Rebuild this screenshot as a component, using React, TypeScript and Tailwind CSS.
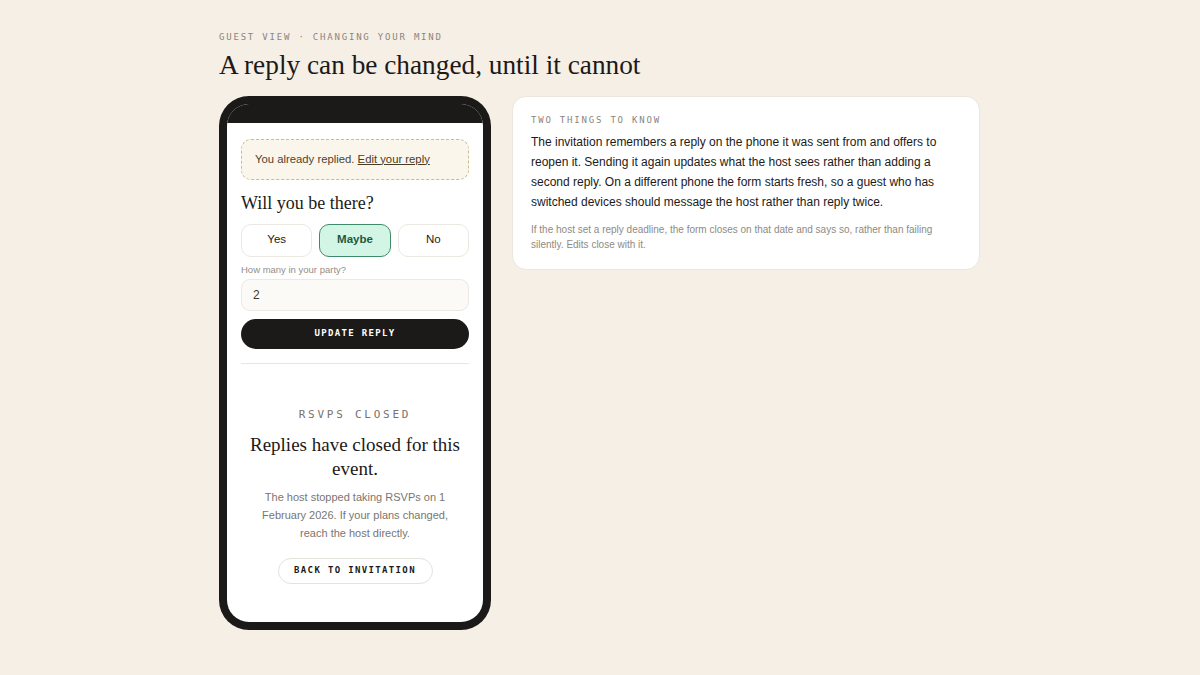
import React from "react";

const mono = { fontFamily: '"DejaVu Sans Mono", "Liberation Mono", monospace' };
const serif = { fontFamily: '"Liberation Serif", "Times New Roman", serif' };
const sans = { fontFamily: '"Liberation Sans", Arial, sans-serif' };

export default function App() {
  return (
    <div className="min-h-[675px] w-full bg-[#f5efe6] pl-[219px] pt-[31px]" style={sans}>
      <div className="text-[9px] tracking-[0.2em] text-[#8a857e] uppercase" style={mono}>
        Guest view · Changing your mind
      </div>
      <h1 className="mt-[3px] text-[27.3px] leading-[34px] text-[#1c1a18]" style={serif}>
        A reply can be changed, until it cannot
      </h1>
      <div className="mt-[14px] flex items-start gap-[21px]">
        {/* Phone */}
        <div className="w-[272px] h-[534px] rounded-[30px] bg-[#1c1a18] p-[8px] flex flex-col">
          <div className="flex-1 rounded-[22px] overflow-hidden bg-white flex flex-col">
            <div className="h-[19px] shrink-0 bg-[#1c1a18] rounded-t-[22px] border-x border-[#3a3733]" />
            <div className="flex-1 px-[14px] pt-[16px] flex flex-col">
              <div className="h-[41px] rounded-[10px] border border-dashed border-[#cdbb8e] bg-[#fbf6ec] flex items-center px-[13px] text-[11.3px] text-[#4e4330]">
                You already replied.&nbsp;<span className="underline text-[#4a3d24]">Edit your reply</span>
              </div>
              <div className="mt-[11px] text-[18px] leading-[24px] text-[#1c1a18]" style={serif}>
                Will you be there?
              </div>
              <div className="mt-[9px] grid grid-cols-3 gap-[7px]">
                <button className="h-[33px] rounded-[10px] border border-[#ebe7e1] bg-white text-[11.5px] text-[#1c1a18]">Yes</button>
                <button className="h-[33px] rounded-[10px] border border-[#3f8a68] bg-[#d3f5e6] text-[11.5px] font-bold text-[#1d5a3f]">Maybe</button>
                <button className="h-[33px] rounded-[10px] border border-[#ebe7e1] bg-white text-[11.5px] text-[#1c1a18]">No</button>
              </div>
              <div className="mt-[6px] text-[9.5px] leading-[14px] text-[#948e87]">How many in your party?</div>
              <div className="mt-[2px] h-[32px] rounded-[9px] border border-[#ece8e2] bg-[#fcfaf7] flex items-center px-[11px] text-[12px] text-[#3a3632]">
                2
              </div>
              <button
                className="mt-[8px] h-[30px] rounded-full bg-[#1c1a18] text-white text-[9px] font-semibold tracking-[0.15em] uppercase"
                style={mono}
              >
                Update reply
              </button>
              <div className="mt-[14px] h-px bg-[#e9e5df]" />
              <div className="flex flex-col items-center text-center">
                <div className="mt-[43px] text-[11px] tracking-[0.25em] text-[#77726c] uppercase" style={mono}>
                  RSVPs closed
                </div>
                <div className="mt-[10px] text-[19px] leading-[24px] text-[#1c1a18] px-[6px]" style={serif}>
                  Replies have closed for this event.
                </div>
                <div className="mt-[7px] text-[11px] leading-[18px] text-[#7a756f] px-[16px]">
                  The host stopped taking RSVPs on 1 February 2026. If your plans changed, reach the host directly.
                </div>
                <button
                  className="mt-[16px] h-[26px] w-[155px] rounded-full border border-[#e6e2dc] bg-white text-[9px] font-semibold tracking-[0.15em] text-[#1c1a18] uppercase"
                  style={mono}
                >
                  Back to invitation
                </button>
              </div>
            </div>
          </div>
        </div>

        {/* Card */}
        <div className="w-[468px] rounded-[14px] border border-[#ece6dc] bg-white px-[18px] pt-[17px] pb-[17px]">
          <div className="text-[9px] tracking-[0.2em] text-[#8a857e] uppercase" style={mono}>
            Two things to know
          </div>
          <p className="mt-[5px] text-[12px] leading-[20px] text-[#1c1a18]">
            The invitation remembers a reply on the phone it was sent from and offers to reopen it. Sending it again updates what the host sees rather than adding a second reply. On a different phone the form starts fresh, so a guest who has switched devices should message the host rather than reply twice.
          </p>
          <p className="mt-[10px] text-[10px] leading-[15px] text-[#8f8a83]">
            If the host set a reply deadline, the form closes on that date and says so, rather than failing silently. Edits close with it.
          </p>
        </div>
      </div>
    </div>
  );
}
